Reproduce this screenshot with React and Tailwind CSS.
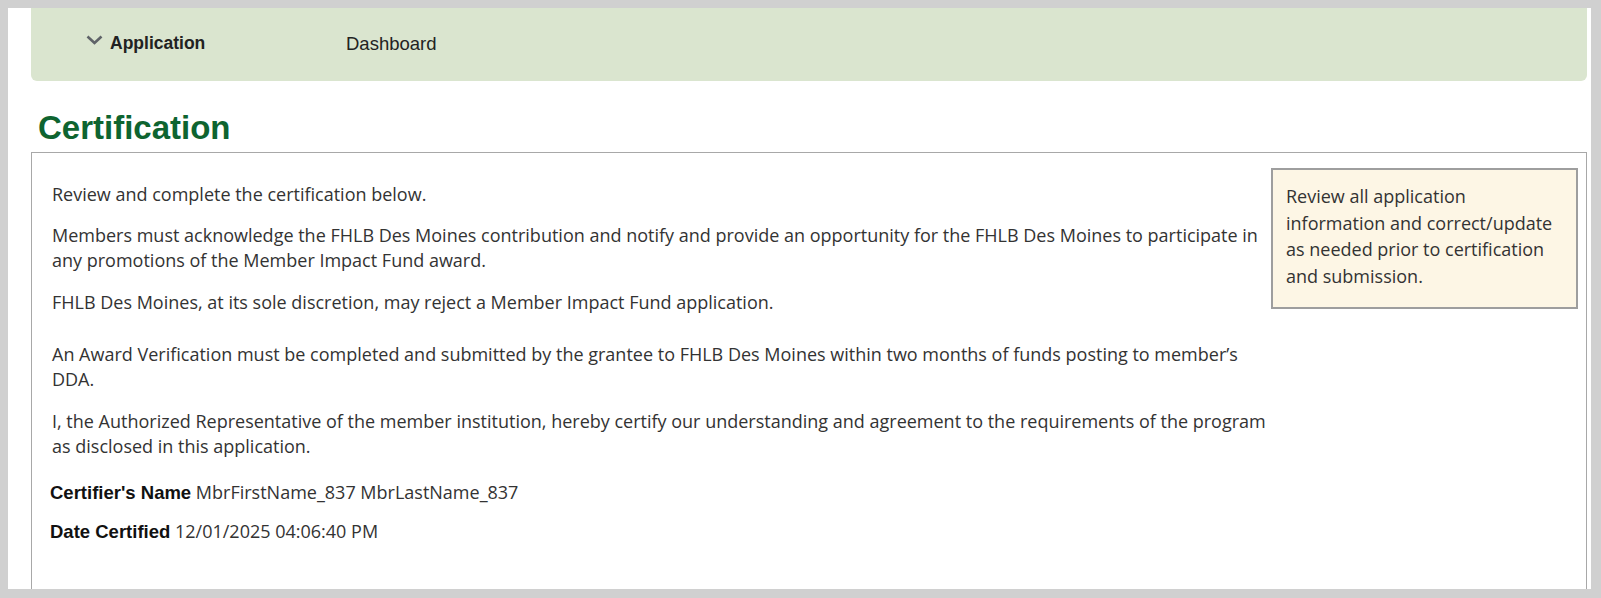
import React from "react";

export default function App() {
  const body = { fontFamily: '"Open Sans", "Noto Sans", sans-serif' };
  const arial = { fontFamily: '"Liberation Sans", Arial, sans-serif' };
  return (
    <div className="w-[1601px] h-[598px] bg-[#d0d0d0] pt-[8px] pl-[8px] pr-[10px] pb-[9px] overflow-hidden">
      <div className="h-full bg-white pl-[23px] pr-[4px] overflow-hidden">
        <div className="h-[73px] bg-[#dae5cf] rounded-b-[6px] flex items-center pl-[55px] pb-[2px] text-[#222]" style={arial}>
          <div className="flex items-center w-[260px]">
            <svg width="17" height="10" viewBox="0 0 17 10" className="mr-[7px] -mt-[8px]">
              <path d="M1.5 1.5 L8.5 8 L15.5 1.5" fill="none" stroke="#5f6368" strokeWidth="2.6" />
            </svg>
            <span className="text-[17.5px] font-bold text-[#222]">Application</span>
          </div>
          <span className="text-[18.5px] text-[#222]">Dashboard</span>
        </div>
        <h1 className="text-[33px] font-bold text-[#0e6430] leading-none mt-[30px] ml-[7px]" style={arial}>
          Certification
        </h1>
        <div className="mt-[8px] border border-[#a8a8a8] border-b-0 h-[500px] flex pl-[20px] pr-[8px] pt-[15px]">
          <div className="flex-1 pt-[14px] pr-[4px] text-[18px] leading-[25px] text-[#333]" style={body}>
            <p className="mb-[16px]">Review and complete the certification below.</p>
            <p className="mb-[17px]">
              Members must acknowledge the FHLB Des Moines contribution and notify and provide an opportunity for the FHLB Des Moines to participate in any promotions of the Member Impact Fund award.
            </p>
            <p className="mb-[27px]">FHLB Des Moines, at its sole discretion, may reject a Member Impact Fund application.</p>
            <p className="mb-[17px]">
              An Award Verification must be completed and submitted by the grantee to FHLB Des Moines within two months of funds posting to member’s DDA.
            </p>
            <p className="mb-[21px]">
              I, the Authorized Representative of the member institution, hereby certify our understanding and agreement to the requirements of the program as disclosed in this application.
            </p>
            <div className="-ml-[2px] mb-[14px]">
              <span className="text-[18.5px] font-bold text-[#111]" style={arial}>Certifier's Name</span>{" "}
              <span>MbrFirstName_837 MbrLastName_837</span>
            </div>
            <div className="-ml-[2px]">
              <span className="text-[18.5px] font-bold text-[#111]" style={arial}>Date Certified</span>{" "}
              <span>12/01/2025 04:06:40 PM</span>
            </div>
          </div>
          <div className="w-[307px] shrink-0">
            <div className="bg-[#fdf6e5] border-2 border-[#9e9e9e] pl-[13px] pr-[22px] pt-[13px] pb-[17px] text-[18px] leading-[26.7px] text-[#333]" style={body}>
              Review all application information and correct/update as needed prior to certification and submission.
            </div>
          </div>
        </div>
      </div>
    </div>
  );
}
